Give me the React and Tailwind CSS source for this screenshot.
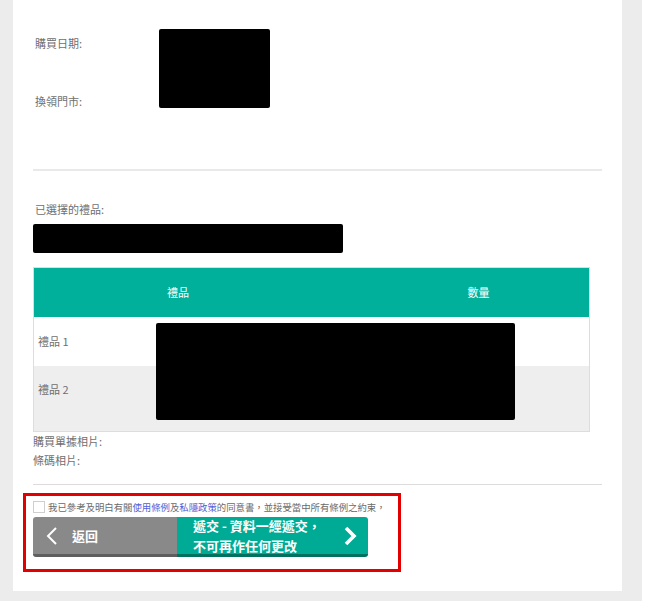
const font = { fontFamily: '"Noto Sans CJK TC", "Noto Sans", sans-serif' }

const Label = ({ children, className = '' }) => (
  <div className={`text-[11px] leading-4 text-[#6f6f6f] ${className}`}>{children}</div>
)

export default function App() {
  return (
    <div className="w-[646px] h-[601px] bg-white flex overflow-hidden" style={font}>
      <div className="w-[642px] h-[601px] bg-[#ececec] pl-[13px] pr-[20px]">
        <div className="bg-white h-[591px] px-[20px] pt-[29px]">
          {/* purchase info */}
          <div className="flex">
            <div className="w-[126px] pt-[6px] pl-[2px]">
              <Label>購買日期:</Label>
              <Label className="mt-[42px]">換領門市:</Label>
            </div>
            <div className="w-[111px] h-[79px] bg-black rounded-[2px]" />
          </div>

          <div className="mt-[60px] h-[2px] bg-[#e9e9e9]" />

          <Label className="mt-[30px] pl-[2px]">已選擇的禮品:</Label>
          <div className="mt-[7px] w-[310px] h-[29px] bg-black rounded-[2px]" />

          {/* gift table */}
          <div className="relative mt-[14px] w-[557px] border border-[#dddddd]">
            <div className="grid grid-cols-[288px_1fr] h-[49px] bg-[#00b09b] text-white text-[11px] items-center">
              <div className="text-center">禮品</div>
              <div className="text-center pl-[46px]">數量</div>
            </div>
            <div className="h-[49px] flex items-center pl-[4px] text-[11px] text-[#6f6f6f] bg-white">禮品 1</div>
            <div className="h-[65px] pt-[15px] pl-[4px] text-[11px] text-[#6f6f6f] bg-[#eeeeee]">禮品 2</div>
            <div className="absolute left-[122px] top-[55px] w-[359px] h-[97px] bg-black rounded-[2px]" />
          </div>

          <div className="text-[11px] leading-[19px] text-[#6f6f6f]">
            <div>購買單據相片:</div>
            <div>條碼相片:</div>
          </div>

          <div className="mt-[14px] h-px bg-[#dcdcdc]" />

          {/* consent + actions */}
          <div className="mt-[8px] -ml-[10px] w-[378px] h-[79px] border-[3px] border-[#e20000] pl-[7px] pt-[5px]">
            <div className="flex items-center gap-[3px]">
              <div className="w-[12px] h-[12px] border border-[#cfcfcf] bg-white" />
              <span className="text-[9.4px] leading-3 text-[#6a6a6a] whitespace-nowrap">
                我已參考及明白有關<span className="text-[#5160d6]">使用條例</span>及<span className="text-[#5160d6]">私隱政策</span>的同意書，並接受當中所有條例之約束，
              </span>
            </div>
            <div className="mt-[4px] flex">
              <button className="w-[144px] h-[40px] bg-[#898989] border-b-[3px] border-[#5f5f5f] rounded-l-[3px] flex items-center pl-[12px] text-white">
                <svg width="14" height="20" viewBox="0 0 14 20" className="mr-[13px]">
                  <polyline points="11,2 3,10 11,18" fill="none" stroke="white" strokeWidth="2" />
                </svg>
                <span className="text-[13px] font-bold">返回</span>
              </button>
              <button className="w-[191px] h-[40px] bg-[#00ab96] border-b-[3px] border-[#00705f] rounded-r-[3px] flex items-center justify-between pl-[16px] pr-[11px] text-white text-left">
                <span className="text-[13px] font-bold leading-[20px]">
                  遞交 - 資料一經遞交，
                  <br />
                  不可再作任何更改
                </span>
                <svg width="14" height="20" viewBox="0 0 14 20">
                  <polyline points="3,2 11,10 3,18" fill="none" stroke="white" strokeWidth="3.6" />
                </svg>
              </button>
            </div>
          </div>
        </div>
      </div>
    </div>
  )
}
